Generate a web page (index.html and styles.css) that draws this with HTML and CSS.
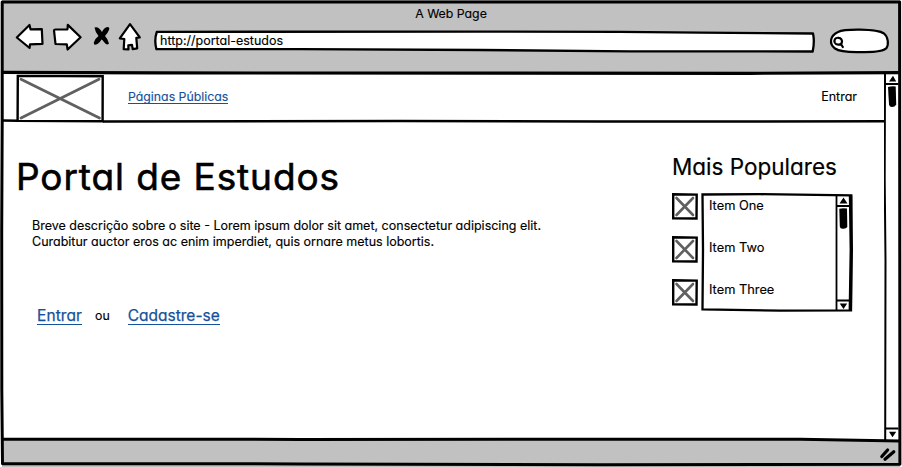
FILE: index.html
```html
<!DOCTYPE html>
<html lang="pt">
<head>
<meta charset="utf-8">
<title>A Web Page</title>
<link rel="stylesheet" href="styles.css">
</head>
<body>
<div class="window">
  <header class="chrome">
    <div class="title"><span>A Web Page</span></div>
    <div class="toolbar">
      <svg class="nav-icons" width="130" height="32" viewBox="14 20 130 32">
        <g fill="#fff" stroke="#000" stroke-width="2.2" stroke-linejoin="round">
          <path d="M16.800 37.500 29.500 25l1 4.300 11.300-.2.700 14.700-12.500.5-.4 3.700z"/>
          <path d="M54 30.400Q54 29.500 55.500 29.500L67.500 29.300 67.800 24.900 80.600 37.300 67.600 49.500 66.800 44.400 55.500 44z"/>
          <path d="M130 24.200 139.800 37.300l-3.500.6.900 10.500-4.500.7-.7-4.200-3.700.4.200 4.200-4.800-.3.600-10.200-4.500-.7z"/>
        </g>
        <path d="M94.500 27.500Q98.500 26 102 32 104 27.500 107.500 27 110 27 109 30 107.500 33.500 105 36 108 39 109 43.500 106.500 46 104 42 102.500 39.500 101.500 39.500 100 42.500 97.500 44 93.500 46 93.800 42.500 95 38.500 98.500 36 95 31.500 94.500 27.500z"/>
      </svg>
      <div class="address">
        <svg class="sketch" width="664" height="26" viewBox="152 28 664 26"><path d="M156.800 31.800 480 31.600 620 31.800 700 32.700 813 33.500Q814.800 41 812.700 51.500L630 51.300 480 50 300 49.200 156.400 49.200Q154 40 156.800 31.800z" fill="#fff" stroke="#000" stroke-width="2.300" stroke-linejoin="round"/></svg>
        <span>http://portal-estudos</span>
      </div>
      <svg class="search" width="62" height="28" viewBox="828 27 62 28">
        <path d="M838 32Q843 29.500 860 29.700 879 30 884 33.500C888.500 37 888.700 45 886.500 48 884 51 872 52.200 861 52 849 52.300 840 52 835 48.500 829 44 829.500 36 838 32z" fill="#fff" stroke="#000" stroke-width="2.200"/>
        <path d="M838.500 37.800c-3.500-.3-4.700 2.300-3.700 4.800 1.200 2.700 5.500 2.400 7 .2.800-2.700-.8-4.800-3.300-5m2.300 6 2 3.200" fill="none" stroke="#000" stroke-width="2.200" stroke-linecap="round"/>
      </svg>
    </div>
  </header>
  <div class="viewport">
    <div class="page">
      <nav class="navbar">
        <svg class="logo" width="88" height="49" viewBox="16 74 88 49"><path d="M17.800 75.900 102.700 76.300 102.600 121.300 17.600 120.900z" fill="#fff" stroke="#000" stroke-width="2.400"/><path d="m21 79.300 78.500 38.700M99 79.300 21 118" stroke="#606060" stroke-width="2.800" stroke-linecap="round"/></svg>
        <a class="link public">Páginas Públicas</a>
        <span class="login">Entrar</span>
      </nav>
      <div class="columns">
        <main class="intro">
          <h1>Portal de Estudos</h1>
          <p>Breve descrição sobre o site - Lorem ipsum dolor sit amet, consectetur adipiscing elit.<br>Curabitur auctor eros ac enim imperdiet, quis ornare metus lobortis.</p>
          <div class="actions"><a class="link enter">Entrar</a><span class="or">ou</span><a class="link join">Cadastre-se</a></div>
        </main>
        <aside class="popular">
          <h2>Mais Populares</h2>
          <div class="popular-body">
            <div class="thumbs">
              <svg width="26" height="27" viewBox="0 0 26 27"><path d="M1.200 1.300 24.700 1.600 24.500 25.500 1.200 25.200z" class="thumb-box"/><path d="m4.500 5 16.500 17M21 5 4.500 22" class="thumb-cross"/></svg>
              <svg width="26" height="27" viewBox="0 0 26 27"><path d="M1.200 1.300 24.700 1.600 24.500 25.500 1.200 25.200z" class="thumb-box"/><path d="m4.500 5 16.500 17M21 5 4.500 22" class="thumb-cross"/></svg>
              <svg width="26" height="27" viewBox="0 0 26 27"><path d="M1.200 1.300 24.700 1.600 24.500 25.500 1.200 25.200z" class="thumb-box"/><path d="m4.500 5 16.500 17M21 5 4.500 22" class="thumb-cross"/></svg>
            </div>
            <div class="list">
              <svg class="sketch" width="153" height="120" viewBox="701 193 153 120">
                <path d="M702.500 194.500 760 194.200 851.300 195.300 851 310.400 780 310.600 702.500 309.300 703 250z" fill="#fff" stroke="#000" stroke-width="2.300"/>
                <path d="M850.500 195.500 851.300 250 850.300 310" fill="none" stroke="#000" stroke-width="3.400"/>
                <path d="M836.500 195V310M837 206H850M837 300.500H850" fill="none" stroke="#000" stroke-width="1.800"/>
                <path d="M843.500 197.500 847.500 203.500H839.500zM839.700 303.500H847.200L843.500 309z"/>
                <path d="M839.300 208.700Q843 207.700 847 208.600L847.300 227Q846 229 843 228.800 840 229 839.800 226.500z"/>
              </svg>
              <ul><li>Item One</li><li>Item Two</li><li>Item Three</li></ul>
            </div>
          </div>
        </aside>
      </div>
    </div>
    <svg class="scrollbar" width="18" height="367" viewBox="884 73 18 367">
      <path d="M885 74 884.700 180 885.500 260 885.200 440" fill="none" stroke="#000" stroke-width="2"/>
      <path d="M885 84H898.500M885 428.500H898.500" stroke="#000" stroke-width="1.800"/>
      <path d="M893 75.700 896.200 81.500H889zM889 431.800H896.200L892.500 437.300z"/>
      <path d="M888 87Q892 85.700 895.700 86.500L896.200 104.500Q895 107 892 107 889.500 107 889 104.500z"/>
    </svg>
  </div>
  <footer class="status"><svg width="22" height="16" viewBox="878 446 22 16"><path d="m881.800 456.500 5.800-6.500M885 459.300 893.800 451.800" stroke="#000" stroke-width="3.200" stroke-linecap="round"/></svg></footer>
  <svg class="frame" width="902" height="467" viewBox="0 0 902 467" fill="none" stroke="#000" stroke-linejoin="round">
    <path d="M2.200 1.900 300 2 620 1.900 899.600 2 899.900 464.300 600 464.700 300 463.900 140 463.700 2.500 463.800 1.800 390 1.700 230 2.200 120z" stroke-width="3"/>
    <path d="M2 72.400 160 72.900 500 73.200 750 73.300 900 72.600" stroke-width="3.200"/>
    <path d="M2 120.600 18 120.800M103 121.500 400 120.900 600 121.600 884 121.300" stroke-width="2.500"/>
    <path d="M2 439.200 300 439.400 800 439.300 900 441" stroke-width="3"/>
  </svg>
</div>
</body>
</html>
```
FILE: styles.css
```css
* { box-sizing: border-box; }
body { margin: 0; font-family: Inter, "Open Sans", sans-serif; font-feature-settings: "cv11" 1; font-size: 12.5px; line-height: 16px; color: #000; background: #fff; -webkit-text-stroke: .15px currentColor; }
svg { display: block; flex: none; }
.window { position: relative; width: 902px; height: 467px; display: flex; flex-direction: column; overflow: hidden; }
.frame { position: absolute; inset: 0; pointer-events: none; }
.chrome { height: 73px; background: #c1c1c1; flex: none; margin: 0 2px; }
.title { height: 20px; padding-top: 6px; text-align: center; }
.title span { font-size: 12.3px; }
.toolbar { display: flex; padding-left: 12px; }
.address { position: relative; width: 664px; height: 26px; margin: 8px 0 0 8px; padding: 5px 8px; }
.address span { position: relative; }
.sketch { position: absolute; left: 0; top: 0; }
.search { margin: 7px 0 0 12px; }
.viewport { flex: 1; display: flex; min-height: 0; }
.page { width: 884px; }
.navbar { height: 49px; padding: 1px 27px 0 16px; display: flex; align-items: flex-start; }
.link { color: #16519b; border-bottom: 1px solid #16519b; white-space: nowrap; }
.public { margin: 16px 0 0 24px; line-height: 14px; height: 14px; font-size: 12.3px; }
.login { margin: 15px 0 0 auto; }
.columns { display: flex; justify-content: space-between; }
.intro { width: 600px; padding: 34px 0 0 16px; }
h1 { margin: 0; font-size: 37px; line-height: 42px; font-weight: 400; letter-spacing: .9px; white-space: nowrap; -webkit-text-stroke: .6px #000; }
p { margin: 20px 0 0 16px; white-space: nowrap; }
.actions { display: flex; align-items: center; margin: 57px 0 0 21px; }
.enter, .join { font-size: 15.5px; line-height: 17px; -webkit-text-stroke: .25px currentColor; }
.enter { letter-spacing: .1px; }
.or { margin: 0 18px 0 13px; font-size: 12.3px; }
.popular { width: 212px; padding-top: 31px; }
h2 { margin: 0; font-size: 22.5px; line-height: 28px; font-weight: 400; white-space: nowrap; -webkit-text-stroke: .2px #000; }
.popular-body { display: flex; gap: 3px; margin-top: 12px; }
.thumbs { display: flex; flex-direction: column; gap: 16px; }
.thumb-box { fill: #fff; stroke: #000; stroke-width: 2.4; }
.thumb-cross { stroke: #606060; stroke-width: 2.6; stroke-linecap: round; }
.list { position: relative; width: 153px; height: 120px; }
ul { position: relative; list-style: none; margin: 0; padding: 5px 8px; font-size: 12.8px; }
li { height: 42px; }
.status { height: 27px; flex: none; margin: 0 2px; background: #c1c1c1; display: flex; justify-content: flex-end; align-items: center; }
```
